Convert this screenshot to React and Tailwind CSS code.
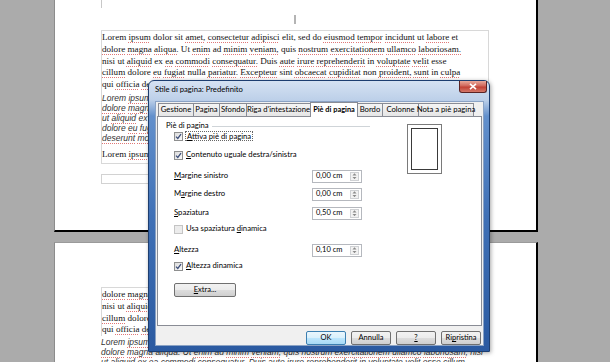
import React from "react";

function Line({ text, className = "" }) {
  const parts = text.split(" ");
  return (
    <div className={"whitespace-nowrap " + className}>
      {parts.map((w, i) => {
        const u = w.startsWith("~");
        const word = u ? w.slice(1) : w;
        return (
          <React.Fragment key={i}>
            {i > 0 && " "}
            {u ? (
              <span className="underline decoration-dotted decoration-[#e07878] decoration-1 underline-offset-[1.5px]">
                {word}
              </span>
            ) : (
              word
            )}
          </React.Fragment>
        );
      })}
    </div>
  );
}

const serifCls =
  "font-['Liberation_Serif','Times_New_Roman',serif] text-[9.1px] leading-[11.8px] text-[#111]";
const italCls =
  "font-['Liberation_Sans',Arial,sans-serif] italic text-[8.5px] leading-[10px] text-[#333]";

const S1 = "Lorem ~ipsum dolor sit ~amet, ~consectetur ~adipisci elit, sed do ~eiusmod ~tempor ~incidunt ut ~labore et";
const S2 = "~dolore ~magna ~aliqua. Ut ~enim ad ~minim ~veniam, quis ~nostrum ~exercitationem ~ullamco ~laboriosam.";
const S3 = "nisi ut ~aliquid ex ~ea ~commodi ~consequatur. Duis ~aute ~irure ~reprehenderit in ~voluptate ~velit esse";
const S4 = "~cillum dolore ~eu ~fugiat nulla ~pariatur. ~Excepteur sint ~obcaecat ~cupiditat non ~proident, ~sunt in ~culpa";
const S5 = "qui ~officia ~deserunt ~mollit anim id est ~laborum.";

const I1 = "Lorem ~ipsum dolor sit ~amet, ~consectetur ~adipisci elit, sed do ~eiusmod ~tempor ~incidunt ut ~labore et";
const I2 = "~dolore ~magna aliqua. Ut ~enim ad ~minim ~veniam, quis ~nostrum ~exercitationem ~ullamco ~laboriosam, nisi";
const I3 = "ut ~aliquid ex ea ~commodi ~consequatur. Duis aute ~irure ~reprehenderit in ~voluptate velit esse cillum";
const I4 = "dolore ~eu ~fugiat nulla ~pariatur. ~Excepteur sint ~obcaecat ~cupiditat non ~proident, sunt in culpa qui officia";
const I5 = "~deserunt ~mollit anim id est ~laborum.";

function Check({ checked = true, disabled = false }) {
  return (
    <div
      className={
        "w-[9px] h-[9px] border flex items-center justify-center shrink-0 " +
        (disabled
          ? "border-[#c4c4c4] bg-[#ececec]"
          : "border-[#8e8f8f] bg-[linear-gradient(135deg,#dcdcdc,#fbfbfb)]")
      }
    >
      {checked && (
        <svg width="7" height="7" viewBox="0 0 7 7">
          <path d="M1 3.6 L2.8 5.4 L6 1.2" fill="none" stroke="#3d4f7a" strokeWidth="1.3" />
        </svg>
      )}
    </div>
  );
}

function U({ children }) {
  return <span className="underline underline-offset-[1px] decoration-[0.6px]">{children}</span>;
}

function Spin({ value }) {
  return (
    <div className="w-[50px] h-[13px] border border-[#b5b8be] bg-white flex items-center justify-between">
      <span className="pl-[3px] text-[7.5px]">{value}</span>
      <div className="w-[9px] h-[9px] mr-[2px] border border-[#cfd1d4] bg-[#f2f2f2] flex flex-col items-center justify-center gap-[1px]">
        <svg width="5" height="2.5" viewBox="0 0 5 2.5">
          <path d="M0.5 2.5 L2.5 0.3 L4.5 2.5 Z" fill="#8a8a8a" />
        </svg>
        <svg width="5" height="2.5" viewBox="0 0 5 2.5">
          <path d="M0.5 0 L2.5 2.2 L4.5 0 Z" fill="#8a8a8a" />
        </svg>
      </div>
    </div>
  );
}

function Btn({ children, def = false, w = "w-[40px]" }) {
  return (
    <div
      className={
        w +
        " h-[14px] rounded-[2px] border flex items-center justify-center text-[7.5px] " +
        (def
          ? "border-[#3c7fb1] bg-[linear-gradient(to_bottom,#eaf6fd,#d9f0fc_50%,#bee6fd_50%,#a7d9f5)]"
          : "border-[#707070] bg-[linear-gradient(to_bottom,#f2f2f2,#ebebeb_50%,#dddddd_50%,#cfcfcf)]")
      }
    >
      {children}
    </div>
  );
}

const tabs = [
  ["Gestione", "w-[36px]"],
  ["Pagina", "w-[27px]"],
  ["Sfondo", "w-[28px]"],
  ["Riga d'intestazione", "w-[65px]"],
  ["Piè di pagina", "w-[48px]", true],
  ["Bordo", "w-[26px]"],
  ["Colonne", "w-[37px]"],
  ["Nota a piè pagina", "w-[56px]"],
];

export default function App() {
  return (
    <div className="relative w-[610px] h-[362px] overflow-hidden bg-[#ababab]">
      <div className="flex flex-col">
        {/* Page 1 */}
        <div className="ml-[54px] w-[484px] h-[232px] bg-white border-l border-l-[#8c8c8c] border-r-2 border-b-2 border-r-black border-b-black pl-[46px] flex flex-col">
          <div className="h-[8px] w-px bg-[#c8c8c8]" />
          <div className="ml-[193px] mt-[7px] h-[9px] w-[2px] bg-[#b4b4b4]" />
          <div className="mt-[6px] w-[388px] border border-[#d8d8d8] pt-px pb-[2px]">
            <div className={serifCls}>
              <Line text={S1} />
              <Line text={S2} />
              <Line text={S3} />
              <Line text={S4} />
              <Line text={S5} />
            </div>
            <div className={italCls + " mt-[2px]"}>
              <Line text={I1} />
              <Line text={I2} />
              <Line text={I3} />
              <Line text={I4} />
              <Line text={I5} />
            </div>
            <div className={serifCls + " mt-[6px]"}>
              <Line text={S1} />
            </div>
          </div>
          <div className="mt-[10px] w-[388px] h-[10px] border border-[#d2d2d2]" />
        </div>
        {/* Page 2 */}
        <div className="ml-[54px] mt-[10px] w-[484px] h-[130px] bg-white border-l border-t border-l-[#8c8c8c] border-t-[#9a9a9a] border-r-2 border-r-black pl-[46px] flex flex-col">
          <div className="mt-[44px] w-[388px] border-l border-t border-[#d8d8d8] pt-px">
            <div className={serifCls}>
              <Line text={S2} />
              <Line text={S3} />
              <Line text={S4} />
              <Line text={S5} />
            </div>
          </div>
          <div className={italCls + " mt-[1px]"}>
            <Line text={I1} />
            <Line text={I2} />
            <Line text={I3} />
          </div>
        </div>
      </div>

      {/* Dialog */}
      <div className="absolute left-[148px] top-[80px] w-[342px] h-[272px] rounded-t-[6px] border border-[#1d3e70] bg-[linear-gradient(to_bottom,#d5e2f2_0%,#bdd0e9_7%,#6390cc_13%,#3f70b6_50%,#2b5aa1_100%)] flex flex-col font-['Lato',sans-serif] text-[7.7px] text-black shadow-[1px_1px_4px_rgba(0,0,0,0.35)]">
        <div className="relative h-[21px] flex items-center pl-[6px] pb-[2px] text-[7.7px]">
          <span>Stile di pagina: Predefinito</span>
          <div className="absolute right-[2px] top-0 w-[28px] h-[12px] rounded-b-[3px] border border-t-0 border-[#5b2424] bg-[linear-gradient(to_bottom,#e9a99b,#d0665a_45%,#c24135_55%,#d4796a)] flex items-center justify-center">
            <svg width="8" height="7" viewBox="0 0 8 7">
              <path d="M1 0.8 L7 6.2 M7 0.8 L1 6.2" stroke="white" strokeWidth="1.6" />
            </svg>
          </div>
        </div>
        <div className="ml-[6px] mr-[5px] mb-[5px] flex-1 bg-[#f0f0f0] border border-[#8aa2c4] flex flex-col px-px">
          {/* tabs */}
          <div className="h-[14px] flex items-end pl-px relative z-10">
            {tabs.map(([t, w, sel], i) => (
              <div
                key={t}
                className={
                  w +
                  " " +
                  (i > 0 ? "-ml-px " : "") +
                  (sel
                    ? "h-[15px] -mb-px bg-white border border-b-0 border-[#898c95] font-bold text-[7.4px] relative z-10"
                    : "h-[13px] border border-b-0 border-[#898c95] bg-[linear-gradient(to_bottom,#f4f4f4,#e6e6e6)]") +
                  " flex items-center justify-center whitespace-nowrap shrink-0"
                }
              >
                {t}
              </div>
            ))}
          </div>
          {/* panel */}
          <div className="h-[210px] bg-white border border-[#898c95] flex">
            <div className="ml-[8px] w-[204px] flex flex-col">
              <div className="mt-[4px] h-[10px] flex items-center">
                <span>Piè di pagina</span>
                <div className="ml-[3px] flex-1 h-px bg-[#cfd4d8]" />
              </div>
              <div className="h-[10px] pl-[8px] flex items-center gap-[2px]">
                <Check />
                <span className="border border-dotted border-[#666] px-px leading-[8px]">
                  <U>A</U>ttiva piè di pagina
                </span>
              </div>
              <div className="mt-[9px] h-[10px] pl-[8px] flex items-center gap-[3px]">
                <Check />
                <span>
                  <U>C</U>ontenuto uguale destra/sinistra
                </span>
              </div>
              <div className="mt-[9px] h-[14px] pl-[8px] pr-[8px] flex items-center justify-between">
                <span>
                  <U>M</U>argine sinistro
                </span>
                <Spin value="0,00 cm" />
              </div>
              <div className="mt-[4px] h-[14px] pl-[8px] pr-[8px] flex items-center justify-between">
                <span>
                  M<U>a</U>rgine destro
                </span>
                <Spin value="0,00 cm" />
              </div>
              <div className="mt-[5px] h-[14px] pl-[8px] pr-[8px] flex items-center justify-between">
                <span>
                  <U>S</U>paziatura
                </span>
                <Spin value="0,50 cm" />
              </div>
              <div className="mt-[4px] h-[10px] pl-[8px] flex items-center gap-[3px]">
                <Check checked={false} disabled />
                <span>
                  Usa spaziatura <U>d</U>inamica
                </span>
              </div>
              <div className="mt-[9px] h-[14px] pl-[8px] pr-[8px] flex items-center justify-between">
                <span>
                  <U>A</U>ltezza
                </span>
                <Spin value="0,10 cm" />
              </div>
              <div className="mt-[4px] h-[10px] pl-[8px] flex items-center gap-[3px]">
                <Check />
                <span>
                  <U>A</U>ltezza dinamica
                </span>
              </div>
              <div className="mt-[12px] pl-[8px]">
                <Btn w="w-[62px]">
                  <U>E</U>xtra...
                </Btn>
              </div>
            </div>
            <div className="ml-[37px] mt-[7px] w-[35px] h-[50px] border border-[#7a7a7a] bg-white p-[3px]">
              <div className="w-full h-full border-[1.5px] border-[#3a3a3a]" />
            </div>
          </div>
          {/* buttons */}
          <div className="flex-1 flex items-start justify-end gap-[5px] pt-[5px] pr-px">
            <Btn def>OK</Btn>
            <Btn>Annulla</Btn>
            <Btn>
              <U>?</U>
            </Btn>
            <Btn>
              Ri<U>p</U>ristina
            </Btn>
          </div>
        </div>
      </div>
    </div>
  );
}
